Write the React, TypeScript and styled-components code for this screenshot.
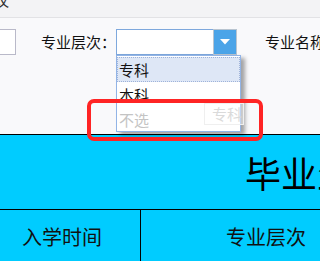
import React, { FC } from "react";
import styled, { createGlobalStyle } from "styled-components";

const GlobalStyle = createGlobalStyle`
  html, body {
    margin: 0;
    padding: 0;
    background: #f9f9fb;
    overflow: hidden;
  }
  body {
    font-family: "Noto Sans CJK SC", "Noto Sans", sans-serif;
  }
`;

const CJK = `"Noto Sans CJK SC", "Noto Sans", sans-serif`;

const Frame = styled.div`
  position: relative;
  width: 100%;
  min-width: 277px;
  height: 261px;
  overflow: hidden;
  background: #f9f9fb;
  display: flex;
  flex-direction: column;
`;

const TopStrip = styled.div`
  height: 17px;
  flex: none;
  background: #f3f3f5;
  border-bottom: 1px solid #e2e2e5;
  overflow: hidden;
`;

const Crumb = styled.div`
  margin: -8px 0 0 -6px;
  font-family: ${CJK};
  font-size: 15px;
  line-height: 15px;
  color: #333;
`;

const FilterBar = styled.div`
  height: 116px;
  flex: none;
  padding-top: 11px;
  box-sizing: border-box;
`;

const FilterRow = styled.div`
  display: flex;
  align-items: center;
  height: 26px;
  margin-left: -80px;
  white-space: nowrap;
`;

const TextInput = styled.div`
  width: 96px;
  height: 26px;
  box-sizing: border-box;
  flex: none;
  background: #fff;
  border: 1px solid #b9b9c9;
`;

const Label = styled.span<{ $gap: number }>`
  margin-left: ${(p) => p.$gap}px;
  flex: none;
  font-family: ${CJK};
  font-size: 15px;
  line-height: 26px;
  color: #111;
`;

const Select = styled.div`
  display: flex;
  width: 121px;
  height: 26px;
  flex: none;
`;

const SelectField = styled.div`
  flex: 1;
  background: #fff;
  border: 1px solid #7ea8dd;
  border-right: none;
`;

const SelectButton = styled.div`
  width: 24px;
  box-sizing: border-box;
  background: #4ba4e8;
  border: 1px solid #b8c4d0;
  display: flex;
  align-items: center;
  justify-content: center;
`;

const Table = styled.div`
  flex: 1;
  background: #00ccff;
  border-top: 1px solid #000;
  display: flex;
  flex-direction: column;
`;

const TitleRow = styled.div`
  height: 74px;
  line-height: 74px;
  border-bottom: 1px solid #000;
  padding-left: 245px;
  font-family: ${CJK};
  font-size: 36px;
  color: #000;
  white-space: nowrap;
`;

const HeaderRow = styled.div`
  display: flex;
  height: 54px;
`;

const HeaderCell = styled.div<{ $width: number; $pad: number; $line?: boolean }>`
  width: ${(p) => p.$width}px;
  flex: none;
  box-sizing: border-box;
  padding-left: ${(p) => p.$pad}px;
  border-right: ${(p) => (p.$line ? "1px solid #000" : "none")};
  font-family: ${CJK};
  font-size: 20px;
  line-height: 54px;
  color: #111;
  white-space: nowrap;
`;

const Dropdown = styled.div`
  position: absolute;
  left: 116px;
  top: 55px;
  width: 125px;
  height: 77px;
  box-sizing: border-box;
  background: #fff;
  border: 1px solid #92b4e6;
  box-shadow: 4px 3px 4px rgba(0, 0, 0, 0.35);
  padding: 1px 0 0 0;
`;

const Option = styled.div<{ $active?: boolean; $disabled?: boolean }>`
  height: 25px;
  box-sizing: border-box;
  padding-left: 1px;
  font-family: ${CJK};
  font-size: 15px;
  line-height: 23px;
  color: ${(p) => (p.$disabled ? "#c4c4c4" : "#111")};
  background: ${(p) => (p.$active ? "#dee7f6" : "transparent")};
  border: 1px ${(p) => (p.$active ? "dotted #9fb3d9" : "solid transparent")};
`;

const Ghost = styled.div`
  position: absolute;
  left: 204px;
  top: 103px;
  width: 40px;
  height: 22px;
  box-sizing: border-box;
  border: 1px solid #efefef;
  background: rgba(255, 255, 255, 0.4);
  padding-left: 7px;
  font-family: ${CJK};
  font-size: 15px;
  line-height: 20px;
  color: #dadada;
`;

const Highlight = styled.div`
  position: absolute;
  left: 87px;
  top: 99px;
  width: 176px;
  height: 42px;
  box-sizing: border-box;
  border: 4px solid #ff2424;
  border-radius: 7px;
`;

const Caret: FC = () => (
  <svg width="10" height="6" viewBox="0 0 10 6">
    <path d="M0 0 H10 L5 5.5 Z" fill="#fff" />
  </svg>
);

const App: FC = () => {
  return (
    <>
      <GlobalStyle />
      <Frame>
        <TopStrip>
          <Crumb>议</Crumb>
        </TopStrip>
        <FilterBar>
          <FilterRow>
            <TextInput />
            <Label $gap={25}>专业层次：</Label>
            <Select>
              <SelectField />
              <SelectButton>
                <Caret />
              </SelectButton>
            </Select>
            <Label $gap={28}>专业名称：</Label>
          </FilterRow>
        </FilterBar>
        <Table>
          <TitleRow>毕业生信息统计表</TitleRow>
          <HeaderRow>
            <HeaderCell $width={141} $pad={22} $line>
              入学时间
            </HeaderCell>
            <HeaderCell $width={260} $pad={85}>
              专业层次
            </HeaderCell>
          </HeaderRow>
        </Table>
        <Dropdown>
          <Option $active>专科</Option>
          <Option>本科</Option>
          <Option $disabled>不选</Option>
        </Dropdown>
        <Ghost>专科</Ghost>
        <Highlight />
      </Frame>
    </>
  );
};

export default App;
